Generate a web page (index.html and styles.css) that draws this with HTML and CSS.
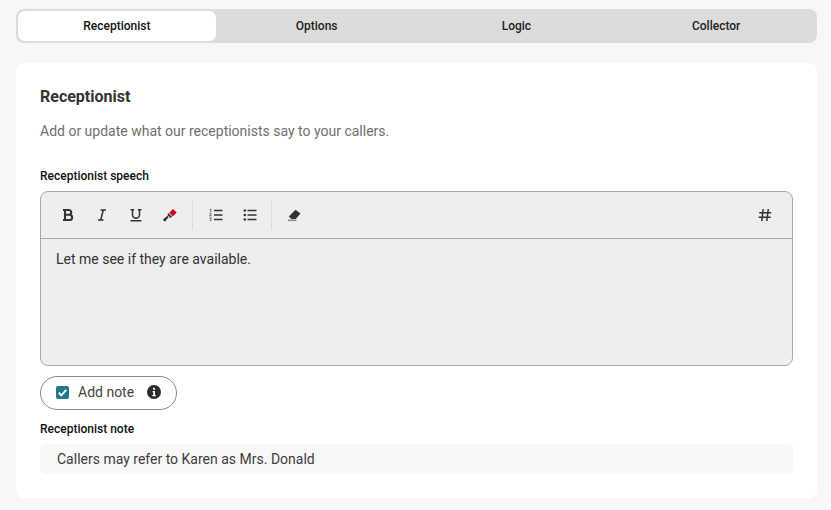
FILE: index.html
```html
<!DOCTYPE html>
<html lang="en">
<head>
<meta charset="utf-8">
<title>Receptionist</title>
<link rel="stylesheet" href="styles.css">
</head>
<body>
<nav class="tabs">
  <div class="tab active">Receptionist</div>
  <div class="tab">Options</div>
  <div class="tab">Logic</div>
  <div class="tab">Collector</div>
</nav>
<main class="card">
  <h2 class="title">Receptionist</h2>
  <p class="subtitle">Add or update what our receptionists say to your callers.</p>
  <div class="label speech-label">Receptionist speech</div>
  <div class="editor">
    <div class="toolbar">
      <div class="group">
        <button class="tool"><svg width="14" height="14" viewBox="0 0 14 14"><path class="stroke-heavy" d="M2 2h5.800a2.400 2.400 0 0 1 0 4.800H4M4 2v10M4 6.800h4.500a2.600 2.600 0 0 1 0 5.200H2"/></svg></button>
        <button class="tool"><svg width="14" height="14" viewBox="0 0 14 14"><path class="stroke" d="M5.500 2H11M3 12h5.500M8.300 2 5.700 12"/></svg></button>
        <button class="tool"><svg width="14" height="14" viewBox="0 0 14 14"><path class="stroke" d="M1.500 1.800h3.700M8.800 1.800h3.700M3.500 1.800v5a3.500 3.500 0 0 0 7 0v-5M1.500 12.700h11"/></svg></button>
        <button class="tool"><svg width="14" height="14" viewBox="0 0 14 14"><path class="red" d="M6.300 4.500 10 1l3.700 3.500-4 4z"/><path class="dark" d="M5.500 5 9 8.800 7.300 10 4.300 6.800z"/><path class="stroke-heavy" d="M5 8.500 2 11.500"/><circle class="dark" cx="1.800" cy="11.800" r="1.500"/></svg></button>
      </div>
      <div class="sep first"></div>
      <div class="group">
        <button class="tool"><svg width="14" height="14" viewBox="0 0 14 14"><path class="thin" d="M5 2.500h8.500M5 7h8.500M5 11.500h8.500"/><path class="hair" d="M.8 1.400 1.800 1v3M.5 5.600c.6-.8 2-.5 1.700.5L.5 7.800h2M.6 10h1.800l-.9 1.200c1.200 0 1.200 1.800-.9 1.500"/></svg></button>
        <button class="tool"><svg width="14" height="14" viewBox="0 0 14 14"><circle class="dark" cx="1.800" cy="2.500" r="1.300"/><circle class="dark" cx="1.800" cy="7" r="1.300"/><circle class="dark" cx="1.800" cy="11.500" r="1.300"/><path class="thin" d="M4.500 2.500h9M4.500 7h9M4.500 11.500h9"/></svg></button>
      </div>
      <div class="sep second"></div>
      <div class="group">
        <button class="tool"><svg width="14" height="14" viewBox="0 0 14 14"><path class="dark" d="M8.500 1.800 13.500 5.500 8.800 11H4.500L1.800 8.500z"/><path class="grey" d="M1 12.300h8.500"/></svg></button>
      </div>
      <button class="tool hash"><svg width="14" height="14" viewBox="0 0 14 14"><path class="stroke" d="M5.200 1 3.700 13M10.300 1 8.800 13M1.200 4.800h12M.7 9.200h12"/></svg></button>
    </div>
    <div class="editor-body">Let me see if they are available.</div>
  </div>
  <label class="note-toggle">
    <span class="checkbox"><svg width="13" height="13" viewBox="0 0 13 13"><path d="M2.800 6.800 5.300 9.300 10.300 3.800"/></svg></span>
    <span class="note-text">Add note</span>
    <svg class="info" width="14" height="14" viewBox="0 0 14 14"><circle cx="7" cy="7" r="7"/><rect x="6" y="2.700" width="2" height="2" rx=".5"/><path d="M5.500 5.900H8v4h.8v1.300H5.400V9.900h.8V7.200h-.7z"/></svg>
  </label>
  <div class="label note-label">Receptionist note</div>
  <div class="note-input">Callers may refer to Karen as Mrs. Donald</div>
</main>
</body>
</html>
```
FILE: styles.css
```css
* { box-sizing: border-box; }
html, body { height: 100%; }
body {
  margin: 0;
  padding: 9px 14px 12px 16px;
  background: #f7f7f7;
  font-family: Roboto, "Liberation Sans", sans-serif;
  color: #333;
  overflow: hidden;
}
.tabs {
  display: grid;
  grid-template-columns: repeat(4, 1fr);
  height: 34px;
  padding: 2px 1px;
  background: #dcdcdc;
  border-radius: 8px;
}
.tab {
  display: flex;
  align-items: center;
  justify-content: center;
  font-size: 12px;
  font-weight: 500;
  color: #222;
  border-radius: 7px;
}
.tab.active { margin: 0 1px; background: #fff; color: #111; }
.card {
  margin-top: 20px;
  height: 435px;
  padding: 24px;
  background: #fff;
  border-radius: 8px;
}
.title {
  margin: 0;
  font-size: 16px;
  line-height: 19px;
  font-weight: 700;
  color: #333;
}
.subtitle {
  margin: 15px 0 0;
  font-size: 14px;
  line-height: 20px;
  color: #6f6f6f;
}
.label {
  font-size: 12px;
  line-height: 14px;
  font-weight: 500;
  color: #111;
}
.speech-label { margin-top: 28px; }
.editor {
  margin-top: 8px;
  height: 175px;
  background: #eee;
  border: 1px solid #a8a8a8;
  border-radius: 8px;
}
.toolbar {
  display: flex;
  align-items: center;
  height: 47px;
  padding: 0 13px;
  border-bottom: 1px solid #a8a8a8;
}
.group { display: flex; gap: 6px; }
.tool {
  display: flex;
  align-items: center;
  justify-content: center;
  width: 28px;
  height: 28px;
  padding: 0;
  background: none;
  border: 0;
}
.sep {
  width: 1px;
  height: 30px;
  background: #dcdcdc;
}
.sep.first { margin: 0 9px 0 8px; }
.sep.second { margin: 0 8px 0 7px; }
.hash { margin-left: auto; }
.stroke { fill: none; stroke: #333; stroke-width: 1.5; }
.stroke-heavy { fill: none; stroke: #333; stroke-width: 2.100; }
.thin { fill: none; stroke: #333; stroke-width: 1.300; }
.hair { fill: none; stroke: #333; stroke-width: .7; }
.grey { fill: none; stroke: #888; stroke-width: 1.500; }
.dark { fill: #333; }
.red { fill: #d0021b; }
.editor-body {
  padding: 10px 15px;
  font-size: 14px;
  line-height: 20px;
  color: #333;
}
.note-toggle {
  display: inline-flex;
  align-items: center;
  width: 137px;
  height: 34px;
  margin-top: 10px;
  padding: 0 0 2px 15px;
  border: 1px solid #8a8a8a;
  border-radius: 17px;
}
.checkbox {
  display: flex;
  align-items: center;
  justify-content: center;
  width: 13px;
  height: 13px;
  background: #23788c;
  border-radius: 2px;
}
.checkbox path { fill: none; stroke: #fff; stroke-width: 2; }
.note-text {
  margin-left: 9px;
  font-size: 14px;
  color: #444;
}
.info { margin-left: 13px; }
.info circle { fill: #2b2b2b; }
.info rect, .info path { fill: #fff; }
.note-label { margin-top: 12px; }
.note-input {
  margin-top: 8px;
  height: 30px;
  padding: 0 17px;
  font-size: 14px;
  line-height: 30px;
  color: #3c3c3c;
  background: #f8f8f8;
  border-radius: 6px;
}
```
